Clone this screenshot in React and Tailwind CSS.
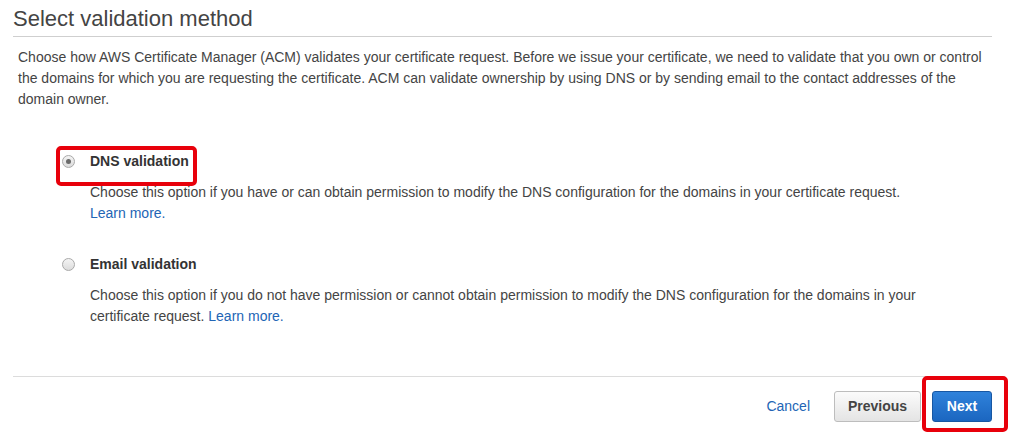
import { useState } from "react";

const font = { fontFamily: '"Liberation Sans", Arial, sans-serif' };

function Radio({ checked, onClick }) {
  return (
    <button
      type="button"
      onClick={onClick}
      className="flex h-[13px] w-[13px] shrink-0 items-center justify-center rounded-full border border-[#a9a9a9] bg-gradient-to-b from-[#f4f4f4] to-[#dcdcdc]"
    >
      {checked && <span className="block h-[5px] w-[5px] rounded-full bg-[#6a6a6a]" />}
    </button>
  );
}

function Option({ checked, onSelect, label, children, highlight }) {
  return (
    <div>
      <div className="relative flex h-[21px] items-center pl-[49px]">
        {highlight && (
          <div className="pointer-events-none absolute left-[43px] top-[-5px] h-[40px] w-[141px] rounded-[5px] border-[4px] border-[#e8000b]" />
        )}
        <Radio checked={checked} onClick={onSelect} />
        <span className="ml-[15px] text-[14px] font-bold leading-[21px] text-[#333]">{label}</span>
      </div>
      <p className="mt-[10px] w-[937px] pl-[77px] text-[14px] leading-[21px] text-[#444]">{children}</p>
    </div>
  );
}

export default function App() {
  const [method, setMethod] = useState("dns");

  return (
    <div className="h-[444px] w-[1019px] overflow-hidden bg-white" style={font}>
      <div className="ml-[13px] w-[979px]">
        {/* header */}
        <div className="border-b border-[#cfcfcf] pb-[5px] pt-[6px]">
          <h1 className="text-[22px] font-normal leading-[25px] text-[#444]">Select validation method</h1>
        </div>

        <p className="mt-[10px] pl-[5px] text-[14px] leading-[21px] text-[#444]">
          Choose how AWS Certificate Manager (ACM) validates your certificate request. Before we issue your
          certificate, we need to validate that you own or control the domains for which you are requesting the
          certificate. ACM can validate ownership by using DNS or by sending email to the contact addresses of the
          domain owner.
        </p>

        <div className="mt-[41px]">
          <Option checked={method === "dns"} onSelect={() => setMethod("dns")} label="DNS validation" highlight>
            Choose this option if you have or can obtain permission to modify the DNS configuration for the domains
            in your certificate request.
            <br />
            <a href="#" className="text-[#2265b5]">Learn more.</a>
          </Option>
        </div>

        <div className="mt-[30px]">
          <Option checked={method === "email"} onSelect={() => setMethod("email")} label="Email validation">
            Choose this option if you do not have permission or cannot obtain permission to modify the DNS
            configuration for the domains in your certificate request.{" "}
            <a href="#" className="text-[#2265b5]">Learn more.</a>
          </Option>
        </div>

        {/* footer */}
        <div className="mt-[49px] flex items-center justify-end border-t border-[#dcdcdc] pt-[14px]">
          <a href="#" className="mr-[24px] text-[14px] text-[#2265b5]">Cancel</a>
          <button
            type="button"
            className="h-[31px] w-[87px] rounded-[3px] border border-[#bdbdbd] bg-gradient-to-b from-[#fbfbfb] to-[#e4e4e4] text-[14px] font-bold text-[#444]"
          >
            Previous
          </button>
          <div className="relative ml-[11px]">
            <div className="pointer-events-none absolute left-[-10px] top-[-15px] h-[56px] w-[86px] rounded-[5px] border-[4px] border-[#e8000b]" />
            <button
              type="button"
              className="h-[31px] w-[60px] rounded-[3px] border border-[#1757a3] bg-gradient-to-b from-[#2f82db] to-[#1b66c0] text-[14px] font-bold text-white"
            >
              Next
            </button>
          </div>
        </div>
      </div>
    </div>
  );
}
